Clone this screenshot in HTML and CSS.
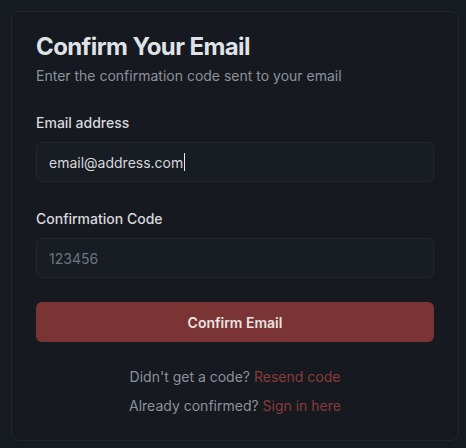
FILE: index.html
```html
<!DOCTYPE html>
<html lang="en">
<head>
<meta charset="utf-8">
<title>Confirm Your Email</title>
<link rel="stylesheet" href="styles.css">
</head>
<body>
<main class="card">
  <header class="head">
    <h1 class="title">Confirm Your Email</h1>
    <p class="subtitle">Enter the confirmation code sent to your email</p>
  </header>
  <form class="form">
    <div class="field">
      <label class="label" for="email">Email address</label>
      <div class="input" id="email">email@address.com<span class="caret"></span></div>
    </div>
    <div class="field">
      <label class="label" for="code">Confirmation Code</label>
      <input class="input" id="code" type="text" placeholder="123456">
    </div>
    <button class="btn" type="button">Confirm Email</button>
  </form>
  <div class="links">
    <p class="line">Didn't get a code? <a class="link" href="#">Resend code</a></p>
    <p class="line">Already confirmed? <a class="link" href="#">Sign in here</a></p>
  </div>
</main>
</body>
</html>
```

FILE: styles.css
```css
* { box-sizing: border-box; }
html, body { margin: 0; padding: 0; }
body {
  background: #161b22;
  font-family: Inter, "Noto Sans", "Liberation Sans", sans-serif;
  color: #d6d9de;
  padding: 11px;
  min-height: 448px;
}
.card {
  width: 448px;
  background: #16191f;
  border: 1px solid #22272e;
  border-radius: 8px;
  padding: 19px 24px 24px;
  display: flex;
  flex-direction: column;
}
.title {
  margin: 0;
  font-size: 24px;
  line-height: 32px;
  font-weight: 700;
  letter-spacing: -0.025em;
  color: #dfe2e6;
}
.subtitle {
  margin: 3px 0 0;
  font-size: 14px;
  line-height: 20px;
  color: #8b929b;
}
.form {
  margin-top: 27px;
  display: flex;
  flex-direction: column;
}
.field {
  display: flex;
  flex-direction: column;
  gap: 9px;
  margin-bottom: 27px;
}
.field + .field { margin-bottom: 24px; }
.label {
  font-size: 14px;
  line-height: 20px;
  font-weight: 500;
  color: #d6d9de;
}
.input {
  height: 40px;
  width: 100%;
  background: #181c23;
  border: 1px solid #23282f;
  border-radius: 6px;
  padding: 0 12px;
  font-family: inherit;
  font-size: 14px;
  color: #d6d9de;
  display: flex;
  align-items: center;
  outline: none;
}
.input::placeholder { color: #6e757e; }
.caret {
  display: inline-block;
  width: 1px;
  height: 18px;
  background: #e6e8eb;
  margin-left: 1px;
}
.btn {
  height: 40px;
  width: 100%;
  border: none;
  border-radius: 6px;
  background: #7b3434;
  color: #e8e2e2;
  font-family: inherit;
  font-size: 14px;
  font-weight: 600;
}
.links {
  margin-top: 25px;
  display: flex;
  flex-direction: column;
  align-items: center;
  gap: 9px;
}
.line {
  margin: 0;
  font-size: 14px;
  line-height: 20px;
  color: #8b929b;
}
.link {
  color: #8a3a3a;
  text-decoration: none;
}
```
